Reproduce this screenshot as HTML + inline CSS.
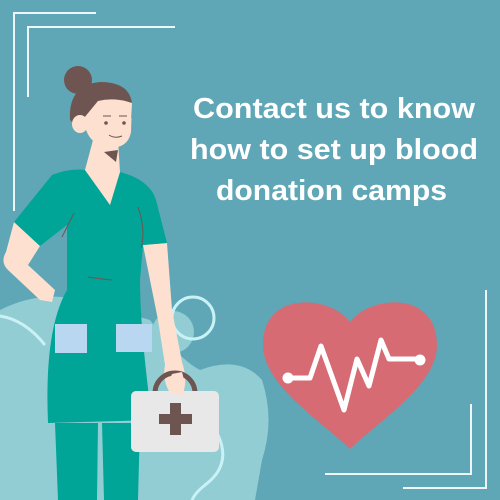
<!DOCTYPE html>
<html><head><style>
html,body{margin:0;padding:0;width:500px;height:500px;overflow:hidden;background:#5fa7b6}
svg{display:block}
</style></head><body>
<svg width="500" height="500" viewBox="0 0 500 500" xmlns="http://www.w3.org/2000/svg">
<rect width="500" height="500" fill="#5fa7b6"/>
<path d="M0 310 Q40 290 80 300 L150 320 Q180 360 200 370 Q240 355 262 380 Q275 420 262 460 L255 500 L0 500 Z" fill="#93cdd4"/>
<circle cx="173" cy="332" r="21" fill="#93cdd4"/>
<circle cx="193" cy="318" r="21" fill="none" stroke="#c9f1f6" stroke-width="3"/>
<path d="M0 316 Q25 320 45 345" fill="none" stroke="#c9f1f6" stroke-width="3"/>
<path d="M218 435 Q232 465 205 485 Q195 493 192 500" fill="none" stroke="#c9f1f6" stroke-width="3"/>
<g stroke="#eef6f8" stroke-width="2" fill="none">
<path d="M14 211 V13 H96"/>
<path d="M28 97 V27 H175"/>
<path d="M486 290 V488 H403"/>
<path d="M471 404 V474 H325"/>
</g>
<g fill="#fff" font-family="Liberation Sans, sans-serif" font-weight="bold" font-size="29">
<text x="193" y="118" textLength="282" lengthAdjust="spacingAndGlyphs">Contact us to know</text>
<text x="190" y="159" textLength="288" lengthAdjust="spacingAndGlyphs">how to set up blood</text>
<text x="216" y="200" textLength="231" lengthAdjust="spacingAndGlyphs">donation camps</text>
</g>
<path d="M350 322 C330 295 263 290 263 345 C263 385 320 420 350 449 C380 420 437 385 437 345 C437 290 370 295 350 322 Z" fill="#d66b73"/>
<polyline points="288,378 310,378 321,346 344,410 357,359 369,386 381,340 389,359 420,359" fill="none" stroke="#fff" stroke-width="5" stroke-linejoin="round"/>
<circle cx="288" cy="378" r="5.5" fill="#fff"/><circle cx="420" cy="360" r="5.5" fill="#fff"/>
<g>
<path d="M14 222 L40 246 L28 265 L55 290 L52 302 L40 300 L8 270 Q0 262 6 252 Z" fill="#fde0cf"/>
<path d="M143 245 L167 243 L172 310 L182 362 Q188 380 183 393 L170 393 Q162 380 165 365 L158 320 Z" fill="#fde0cf"/>
<path d="M55 423 L98 423 L97 500 L58 500 Z" fill="#00a597"/>
<path d="M102 423 L140 423 L138 500 L104 500 Z" fill="#00a597"/>
<path d="M52 175 Q70 168 85 170 L110 205 L120 172 Q150 180 156 200 L167 243 L143 245 L140 280 Q140 330 152 420 L48 423 Q44 330 67 290 L67 225 L40 246 L14 222 Z" fill="#00a597"/>
<path d="M88 277 Q100 279 112 280" stroke="#6f5551" stroke-width="1" fill="none"/>
<path d="M62 237 L74 213" stroke="#6f5551" stroke-width="1" fill="none"/>
<path d="M138 207 Q146 230 141 248" stroke="#6f5551" stroke-width="1" fill="none"/>
<rect x="55" y="324" width="32" height="29" fill="#b9d7f1"/>
<rect x="116" y="324" width="36" height="28" fill="#b9d7f1"/>
<path d="M93 140 L118 140 L120 172 L110 205 L85 170 Z" fill="#fde0cf"/>
<path d="M104 152 L118 150 L116 162 Z" fill="#6f5551"/>
<circle cx="78" cy="80" r="14" fill="#6f5551"/>
<path d="M70 120 Q68 85 100 82 Q130 82 132 104 L132 118 L80 130 Z" fill="#6f5551"/>
<path d="M98 101 Q115 97 132 103 L131 132 Q128 148 110 148 Q92 146 86 130 L84 118 Z" fill="#fde0cf"/>
<ellipse cx="80" cy="124" rx="8" ry="9" fill="#fde0cf"/>
<circle cx="106" cy="123" r="1.8" fill="#6f5551"/><circle cx="124" cy="123" r="1.8" fill="#6f5551"/>
<path d="M103 116 H111 M119 116 H127" stroke="#6f5551" stroke-width="1"/>
<path d="M109 135 Q115 139 122 136" stroke="#6f5551" stroke-width="1" fill="none"/>
<path d="M155 393 A20 20 0 0 1 195 393" fill="none" stroke="#6f5551" stroke-width="5"/>
<rect x="131" y="391" width="88" height="61" rx="5" fill="#e8e8e8"/>
<rect x="170" y="403" width="11" height="32" fill="#6f5551"/>
<rect x="159" y="414" width="33" height="10" fill="#6f5551"/>
<path d="M170 393 Q168 382 172 374 L182 372 Q186 385 183 395 Z" fill="#fde0cf"/>
</g>
</svg>
</body></html>
